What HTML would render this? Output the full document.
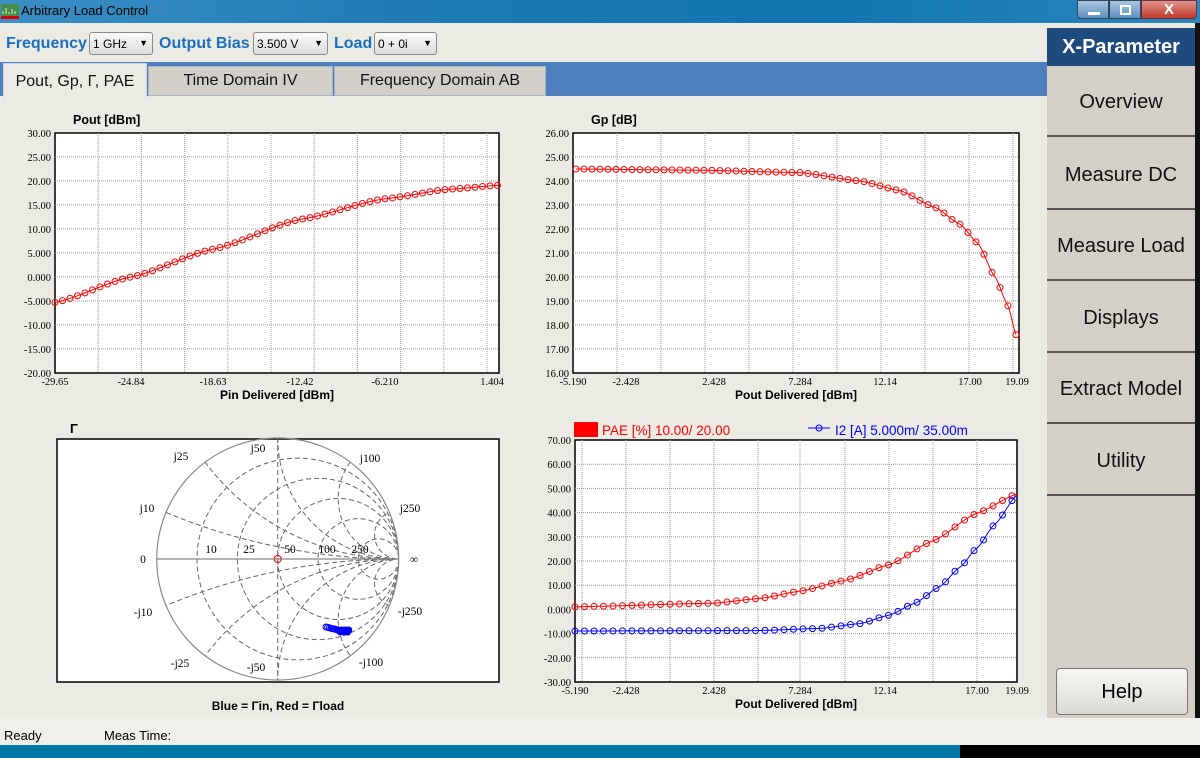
<!DOCTYPE html>
<html style="overflow:hidden;width:1200px;height:758px"><head><meta charset="utf-8">
<style>
*{margin:0;padding:0;box-sizing:border-box}
html,body{overflow:hidden}
body{width:1200px;height:758px;overflow:hidden;background:#ecebe3;font-family:"Liberation Sans",sans-serif;position:relative}
.abs{position:absolute}
#title{left:0;top:0;width:1200px;height:23px;background:linear-gradient(90deg,#3a8fc4,#1a78b2 40%,#1276b0 70%,#2a86bd);}
#title span{position:absolute;left:21px;top:3px;font-size:13px;color:#000}
#tb{left:0;top:23px;width:1047px;height:39px;background:#ecebe3}
.lbl{position:absolute;top:12px;font-weight:bold;color:#1a6fc0;font-size:16px}
.dd{position:absolute;top:9px;height:23px;border:1px solid #8a8a8a;border-radius:3px;background:linear-gradient(#fafafa,#dcdcdc);font-size:12px;padding:4px 3px;color:#000}
.dd:after{content:"▼";position:absolute;right:4px;top:5px;font-size:9px}
#tabbar{left:0;top:62px;width:1047px;height:34px;background:#4f7fbe}
.tab{position:absolute;top:66px;height:30px;background:#d2cfc8;border:1px solid #a9b4c5;font-size:16px;color:#111;text-align:center;padding-top:5px}
.sb{position:absolute;left:0;width:148px;height:71px;border-bottom:2px solid #555;font-size:20px;text-align:center;line-height:72px;color:#111;background:#d4d0c8}
#status{left:0;top:718px;width:1200px;height:27px;background:#f0efea;font-size:13px}
</style></head><body>
<div id="title" class="abs"><svg class="abs" style="left:1px;top:4px" width="18" height="16"><rect x="0" y="0" width="18" height="12" fill="#4a8a4a"/><rect x="0" y="12" width="18" height="3" fill="#d00"/><path d="M2 10V7M5 10V4M8 10V8M11 10V5M14 10V7" stroke="#cfc" stroke-width="1"/></svg><span>Arbitrary Load Control</span>
<div class="abs" style="left:1077px;top:0;width:32px;height:19px;border:1px solid #345;border-radius:0 0 0 4px;background:linear-gradient(#a9c6e2,#5f8fbf)"><div class="abs" style="left:10px;top:11px;width:12px;height:3px;background:#fff"></div></div>
<div class="abs" style="left:1109px;top:0;width:32px;height:19px;border:1px solid #345;background:linear-gradient(#a9c6e2,#5f8fbf)"><div class="abs" style="left:10px;top:4px;width:11px;height:10px;border:2px solid #fff"></div></div>
<div class="abs" style="left:1141px;top:0;width:56px;height:19px;border:1px solid #634;border-radius:0 0 4px 0;background:linear-gradient(#e0948a,#c1392b);color:#fff;font-weight:bold;text-align:center;font-size:15px;line-height:18px">X</div>
</div>
<div id="tb" class="abs">
<span class="lbl" style="left:6px">Frequency</span><div class="dd" style="left:89px;width:64px">1 GHz</div>
<span class="lbl" style="left:159px">Output Bias</span><div class="dd" style="left:253px;width:75px">3.500 V</div>
<span class="lbl" style="left:334px">Load</span><div class="dd" style="left:374px;width:63px">0 + 0i</div>
</div>
<div id="tabbar" class="abs"></div>
<div class="tab" style="left:148px;width:185px">Time Domain IV</div>
<div class="tab" style="left:334px;width:212px">Frequency Domain AB</div>
<div class="tab" style="left:3px;top:63px;width:144px;height:35px;background:#ecebe3;border-color:#cfd6e0;border-bottom:none;padding-top:9px">Pout, Gp, Γ, PAE</div>
<div class="abs" style="left:1047px;top:28px;width:153px;height:690px;background:#d4d0c8"></div>
<div class="abs" style="left:1195px;top:23px;width:5px;height:722px;background:#111"></div>
<div class="abs" style="left:1047px;top:28px;width:148px;height:38px;background:#1f4a7e;color:#fff;font-weight:bold;font-size:20px;text-align:center;line-height:38px">X-Parameter</div>
<div class="sb" style="left:1047px;top:66px">Overview</div>
<div class="sb" style="left:1047px;top:139px">Measure DC</div>
<div class="sb" style="left:1047px;top:210px">Measure Load</div>
<div class="sb" style="left:1047px;top:282px">Displays</div>
<div class="sb" style="left:1047px;top:353px">Extract Model</div>
<div class="sb" style="left:1047px;top:425px">Utility</div>
<div class="abs" style="left:1056px;top:668px;width:132px;height:47px;border:1px solid #777;border-radius:4px;background:linear-gradient(#f6f6f4,#dcdad4);font-size:20px;text-align:center;line-height:46px">Help</div>
<div id="status" class="abs"><span class="abs" style="left:4px;top:10px">Ready</span><span class="abs" style="left:104px;top:10px">Meas Time:</span></div>
<div class="abs" style="left:0;top:745px;width:960px;height:13px;background:#0177a6"></div>
<div class="abs" style="left:960px;top:745px;width:240px;height:13px;background:#000"></div>

<svg class="abs" style="left:0;top:96px" width="1047" height="622" viewBox="0 96 1047 622" font-family="Liberation Serif,serif" font-size="10.5">
<g id="g"></g>
</svg>
<script>
var NS="http://www.w3.org/2000/svg",G=document.getElementById('g');
function el(t,a,txt){var e=document.createElementNS(NS,t);for(var k in a)e.setAttribute(k,a[k]);if(txt!=null)e.textContent=txt;G.appendChild(e);return e;}
function interp(pts,x){for(var i=0;i<pts.length-1;i++){if(x<=pts[i+1][0]){var a=pts[i],b=pts[i+1];var t=(x-a[0])/(b[0]-a[0]);var s=t*t*(3-2*t);var l=a[1]+(b[1]-a[1])*t;var m=a[1]+(b[1]-a[1])*s;return 0.6*l+0.4*m;}}return pts[pts.length-1][1];}
function plot(x0,x1,y0,y1,ylabels,xt,title,xtitle,vgrid){
 el('rect',{x:x0,y:y0,width:x1-x0,height:y1-y0,fill:'#fff',stroke:'#000','stroke-width':1.5});
 var n=ylabels.length;for(var i=0;i<n;i++){var y=y0+(y1-y0)*i/(n-1);
  if(i>0&&i<n-1)el('line',{x1:x0,x2:x1,y1:y,y2:y,stroke:'#999','stroke-dasharray':'1 1'});
  el('text',{x:x0-4,y:y+4,'text-anchor':'end'},ylabels[i]);}
 vgrid.forEach(function(x){el('line',{x1:x,x2:x,y1:y0,y2:y1,stroke:'#999','stroke-dasharray':'1 1'});});
 xt.forEach(function(t){el('text',{x:t[0],y:y1+12,'text-anchor':'middle'},t[1]);});
 el('text',{x:x0+18,y:y0-9,'font-family':'Liberation Sans,sans-serif','font-weight':'bold','font-size':12.5},title);
 el('text',{x:(x0+x1)/2,y:y1+26,'text-anchor':'middle','font-family':'Liberation Sans,sans-serif','font-weight':'bold','font-size':12},xtitle);
}
function curve(pts,x0,x1,step,col,yf){var d='';for(var x=x0;x<=x1+0.01;x+=1){d+=(d?'L':'M')+x+' '+yf(interp(pts,x)).toFixed(1);}
 el('path',{d:d,fill:'none',stroke:col,'stroke-width':1});
 for(var x=x0;x<=x1+0.01;x+=step)el('circle',{cx:x,cy:yf(interp(pts,x)),r:3,fill:'none',stroke:col,'stroke-width':1});}
function grid(a,b,s){var r=[];for(var x=a+s;x<b-3;x+=s)r.push(x);return r;}
plot(55,499,133,373,['30.00','25.00','20.00','15.00','10.00','5.000','0.000','-5.000','-10.00','-15.00','-20.00'],[[55,'-29.65'],[131,'-24.84'],[213,'-18.63'],[300,'-12.42'],[385,'-6.210'],[492,'1.404']],'Pout [dBm]','Pin Delivered [dBm]',grid(55,499,43.2));
curve([[55,-5.3],[131,0],[213,5.8],[300,12],[385,16.3],[450,18.3],[499,19.1]],55,499,7.5,'#f00',function(v){return 133+(30-v)*4.8;});
plot(573,1019,133,373,['26.00','25.00','24.00','23.00','22.00','21.00','20.00','19.00','18.00','17.00','16.00'],[[573,'-5.190'],[626,'-2.428'],[714,'2.428'],[800,'7.284'],[885,'12.14'],[970,'17.00'],[1017,'19.09']],'Gp [dB]','Pout Delivered [dBm]',grid(573,1019,44));
curve([[576,24.5],[700,24.45],[800,24.35],[860,24.0],[900,23.6],[935,22.9],[960,22.2],[978,21.4],[995,20.0],[1008,18.8],[1016,17.6]],576,1016,8,'#f00',function(v){return 133+(26-v)*24;});
plot(575,1017,440,682,['70.00','60.00','50.00','40.00','30.00','20.00','10.00','0.000','-10.00','-20.00','-30.00'],[[575,'-5.190'],[626,'-2.428'],[714,'2.428'],[800,'7.284'],[885,'12.14'],[977,'17.00'],[1017,'19.09']],'','Pout Delivered [dBm]',[582,626,670,714,758,800,845,889,933,977]);
curve([[575,0.5],[714,2],[760,4],[800,7],[845,11.5],[889,18],[933,28],[977,39.5],[1017,47.5]],575,1017,9.5,'#f00',function(v){return 440+(70-v)*2.4;});
curve([[575,-9.6],[758,-9.4],[820,-8.5],[860,-6.5],[889,-3],[915,2],[940,9],[960,17],[977,25],[995,35],[1017,47]],575,1017,9.5,'#00f',function(v){return 440+(70-v)*2.4;});
el('rect',{x:574,y:422,width:24,height:15,fill:'#f00'});
el('text',{x:602,y:435,fill:'#f00','font-family':'Liberation Sans,sans-serif','font-size':13.5},'PAE [%] 10.00/ 20.00');
el('line',{x1:808,x2:830,y1:428,y2:428,stroke:'#00f'});el('circle',{cx:819,cy:428,r:3,fill:'none',stroke:'#00f'});
el('text',{x:835,y:435,fill:'#00f','font-family':'Liberation Sans,sans-serif','font-size':13.5},'I2 [A] 5.000m/ 35.00m');
var cx=277.7,cy=559,R=121;
el('rect',{x:57,y:439,width:442,height:243,fill:'#fff',stroke:'#000','stroke-width':1.5});
el('text',{x:70,y:433,'font-family':'Liberation Sans,sans-serif','font-weight':'bold','font-size':13},'Γ');
var cp=document.createElementNS(NS,'clipPath');cp.setAttribute('id','uc');var cc=document.createElementNS(NS,'circle');cc.setAttribute('cx',cx);cc.setAttribute('cy',cy);cc.setAttribute('r',R);cp.appendChild(cc);G.appendChild(cp);
var sg=document.createElementNS(NS,'g');sg.setAttribute('clip-path','url(#uc)');G.appendChild(sg);
function sc(a){var e=document.createElementNS(NS,'circle');for(var k in a)e.setAttribute(k,a[k]);e.setAttribute('fill','none');e.setAttribute('stroke','#666');e.setAttribute('stroke-dasharray','5 3');sg.appendChild(e);}
[0.2,0.5,1,2,5].forEach(function(r){sc({cx:cx+R*r/(1+r),cy:cy,r:R/(1+r)});});
[0.2,0.5,1,2,5].forEach(function(x){sc({cx:cx+R,cy:cy-R/x,r:R/x});sc({cx:cx+R,cy:cy+R/x,r:R/x});});
el('line',{x1:cx,x2:cx,y1:cy-R,y2:cy+R,stroke:'#666','stroke-dasharray':'5 3'});
el('circle',{cx:cx,cy:cy,r:R,fill:'none',stroke:'#888','stroke-width':1.2});
el('line',{x1:cx-R,x2:cx+R,y1:cy,y2:cy,stroke:'#888','stroke-width':1.2});
[['0',143,563],['10',211,553],['25',249,553],['50',290,553],['100',327,553],['250',360,553],['∞',414,563],['j10',147,512],['j25',181,460],['j50',258,452],['j100',370,462],['j250',410,512],['-j10',143,616],['-j25',180,667],['-j50',256,671],['-j100',371,666],['-j250',410,615]].forEach(function(t){el('text',{x:t[1],y:t[2],'text-anchor':'middle','font-size':11.5},t[0]);});
el('circle',{cx:cx,cy:cy,r:3.5,fill:'none',stroke:'#f00'});
for(var i=0;i<14;i++){var x=326+i*1.6,y=627+Math.min(i,8)*0.4;el('circle',{cx:x,cy:y,r:3,fill:'none',stroke:'#00f'});}
for(var i=0;i<10;i++)el('circle',{cx:338+i*1.2,cy:630+(i%3),r:3,fill:'#00f',stroke:'#00f'});
el('text',{x:278,y:710,'text-anchor':'middle','font-family':'Liberation Sans,sans-serif','font-weight':'bold','font-size':12},'Blue = Γin, Red = Γload');
</script>
</body></html>
